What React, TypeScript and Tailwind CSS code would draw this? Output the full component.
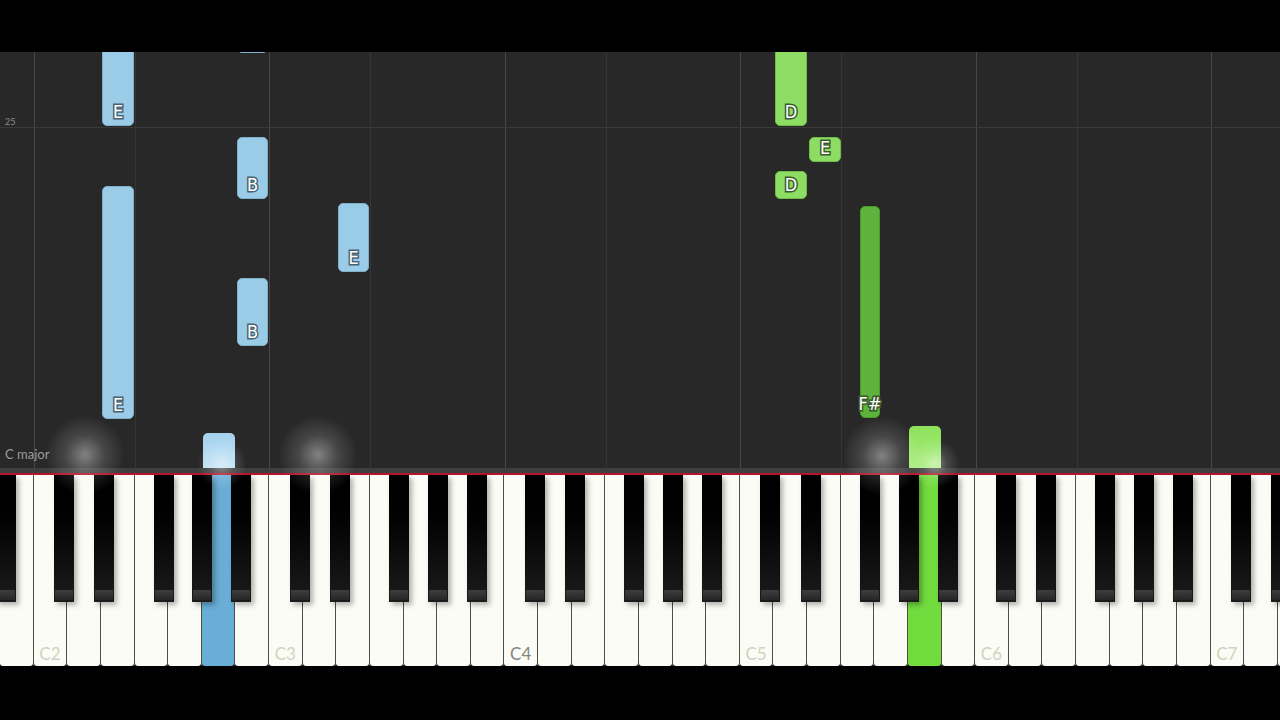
import React from "react";

const W = 33.63;
const LETTERS = ["C", "D", "E", "F", "G", "A", "B"];

// white keys start at B1 on the far left
const whiteKeys = Array.from({ length: 39 }, (_, i) => {
  if (i === 0) return "B1";
  return LETTERS[(i - 1) % 7] + (2 + Math.floor((i - 1) / 7));
});

// black key centers: boundary index + offset
const blackKeys: number[] = [0 * W + 6];
for (let o = 0; o < 6; o++) {
  const b = 1 + o * 7;
  blackKeys.push((b + 1) * W - 3);
  blackKeys.push((b + 2) * W + 3.5);
  blackKeys.push((b + 4) * W - 4.5);
  blackKeys.push((b + 5) * W + 0.5);
  blackKeys.push((b + 6) * W + 6);
}

type Note = {
  x: number;
  w: number;
  top: number;
  h: number;
  color: "blue" | "green" | "dgreen";
  label?: string;
};

const notes: Note[] = [
  { x: 102, w: 32, top: -10, h: 84, color: "blue", label: "E" },
  { x: 237, w: 31, top: -10, h: 11, color: "blue" },
  { x: 237, w: 31, top: 85, h: 62, color: "blue", label: "B" },
  { x: 338, w: 31, top: 151, h: 69, color: "blue", label: "E" },
  { x: 237, w: 31, top: 226, h: 68, color: "blue", label: "B" },
  { x: 102, w: 32, top: 134, h: 233, color: "blue", label: "E" },
  { x: 775, w: 32, top: -10, h: 84, color: "green", label: "D" },
  { x: 809, w: 32, top: 85, h: 25, color: "green", label: "E" },
  { x: 775, w: 32, top: 119, h: 28, color: "green", label: "D" },
  { x: 860, w: 20, top: 154, h: 212, color: "dgreen", label: "F#" },
];

const gridLines = [
  { x: 34, c: true },
  { x: 135, c: false },
  { x: 269, c: true },
  { x: 370, c: false },
  { x: 505, c: true },
  { x: 606, c: false },
  { x: 740, c: true },
  { x: 841, c: false },
  { x: 976, c: true },
  { x: 1077, c: false },
  { x: 1211, c: true },
];

const glows = [
  { x: 85, y: 455, s: 80 },
  { x: 318, y: 455, s: 80 },
  { x: 882, y: 456, s: 80 },
  { x: 222, y: 464, s: 50 },
  { x: 935, y: 464, s: 50 },
];

function NoteBar({ n }: { n: Note }) {
  const bg =
    n.color === "blue"
      ? "bg-[#9acbe7] border-[#7fb0cc]"
      : n.color === "green"
        ? "bg-[#8ddc63] border-[#6fbd48]"
        : "bg-[#5db33b] border-[#4a9a2c]";
  const stroke =
    n.color === "blue"
      ? "[-webkit-text-stroke:3px_#4a6270]"
      : "[-webkit-text-stroke:3px_#3a5a2c]";
  return (
    <div
      className={`absolute ${bg} flex flex-col items-center justify-end rounded-[5px] border pb-[3px]`}
      style={{ left: n.x, width: n.w, top: n.top, height: n.h }}
    >
      {n.label && (
        <span
          className={`text-[18px] leading-[20px] font-normal text-white ${stroke} [paint-order:stroke_fill] whitespace-nowrap`}
          style={{ fontFamily: '"DejaVu Sans Condensed", "DejaVu Sans", sans-serif' }}
        >
          {n.label}
        </span>
      )}
    </div>
  );
}

export default function App() {
  return (
    <div
      className="relative flex h-[720px] w-[1280px] flex-col overflow-hidden bg-black"
      style={{ fontFamily: 'Lato, "Open Sans", sans-serif' }}
    >
      <div className="h-[52px] shrink-0 bg-black" />

      {/* falling notes */}
      <div className="relative h-[416px] shrink-0 overflow-hidden bg-[#282828]">
        {gridLines.map((g) => (
          <div
            key={g.x}
            className={`absolute top-0 bottom-0 w-px ${g.c ? "bg-[#474747]" : "bg-[#363636]"}`}
            style={{ left: g.x }}
          />
        ))}
        <div className="absolute left-0 right-0 top-[75px] h-px bg-[#393939]" />
        <span className="absolute left-[5px] top-[63px] text-[9px] text-[#8a8a8a]">25</span>

        {notes.map((n, i) => (
          <NoteBar key={i} n={n} />
        ))}

        {/* notes being played */}
        <div className="absolute bottom-0 left-[203px] h-[35px] w-[32px] rounded-t-[5px] bg-gradient-to-b from-[#a4d2ee] to-[#bfe1f4]" />
        <div className="absolute bottom-0 left-[909px] h-[42px] w-[32px] rounded-t-[5px] bg-gradient-to-b from-[#8ee25a] to-[#a8ec7d]" />

        <span className="absolute bottom-[4px] left-[5px] text-[13px] text-[#9c9c9c]">C major</span>
      </div>

      <div className="h-[5px] shrink-0 bg-[#3e3e3e]" />
      <div className="h-[2px] shrink-0 bg-[#b3142c]" />

      {/* keyboard */}
      <div className="relative h-[191px] shrink-0 overflow-hidden bg-black">
        <div className="flex h-full">
          {whiteKeys.map((name, i) => {
            const pressed = name === "A2" ? "blue" : name === "A5" ? "green" : null;
            const bg =
              pressed === "blue"
                ? "bg-[#69aed6]"
                : pressed === "green"
                  ? "bg-[#72dc3e]"
                  : "bg-[#fcfcf6]";
            const isC = name.startsWith("C");
            return (
              <div
                key={i}
                className="flex h-full shrink-0 border-r-[1.5px] border-[#4e4e46]"
                style={{ width: W }}
              >
                <div
                  className={`flex flex-1 flex-col items-center justify-end rounded-b-[3px] pb-[2px] ${bg}`}
                >
                  {isC && (
                    <span
                      className={`text-[17px] leading-[20px] ${name === "C4" ? "text-[#86867c]" : "text-[#d3d1bd]"}`}
                    >
                      {name}
                    </span>
                  )}
                </div>
              </div>
            );
          })}
        </div>

        {blackKeys.map((c, i) => (
          <div
            key={i}
            className="absolute top-0 flex h-[127px] w-[20px] flex-col bg-gradient-to-b from-black via-[#080808] to-[#1c1c1c] shadow-[3px_3px_5px_rgba(0,0,0,0.3)]"
            style={{ left: c - 10 }}
          >
            <div className="flex-1" />
            <div className="mx-[1px] mb-[2px] h-[10px] rounded-[1px] bg-gradient-to-b from-[#3e3e3e] to-[#262626]" />
          </div>
        ))}
      </div>

      <div className="flex-1 bg-black" />

      {/* glows from played notes */}
      {glows.map((g, i) => (
        <div
          key={i}
          className="pointer-events-none absolute rounded-full bg-[radial-gradient(circle,rgba(255,255,255,0.42)_0%,rgba(255,255,255,0.14)_35%,rgba(255,255,255,0)_70%)]"
          style={{ left: g.x - g.s / 2, top: g.y - g.s / 2, width: g.s, height: g.s }}
        />
      ))}
    </div>
  );
}
